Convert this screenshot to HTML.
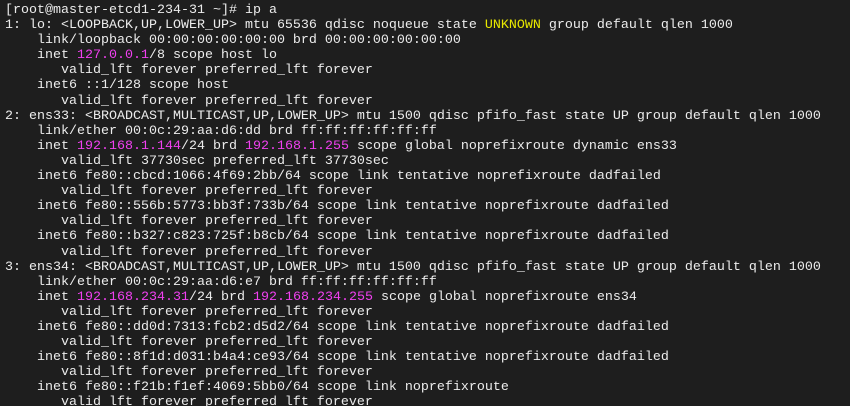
<!DOCTYPE html>
<html><head><meta charset="utf-8"><style>
html,body{margin:0;padding:0;background:#1e1e1e;width:850px;height:406px;overflow:hidden}
pre{margin:0;padding:3px 0 0 5px;font-family:"Liberation Mono","DejaVu Sans Mono",monospace;font-size:13.33px;line-height:15.1px;color:#ececec;white-space:pre}
.m{color:#f040f0}.y{color:#e8e800}
</style></head><body><pre>[root@master-etcd1-234-31 ~]# ip a
1: lo: &lt;LOOPBACK,UP,LOWER_UP&gt; mtu 65536 qdisc noqueue state <span class="y">UNKNOWN</span> group default qlen 1000
    link/loopback 00:00:00:00:00:00 brd 00:00:00:00:00:00
    inet <span class="m">127.0.0.1</span>/8 scope host lo
       valid_lft forever preferred_lft forever
    inet6 ::1/128 scope host
       valid_lft forever preferred_lft forever
2: ens33: &lt;BROADCAST,MULTICAST,UP,LOWER_UP&gt; mtu 1500 qdisc pfifo_fast state UP group default qlen 1000
    link/ether 00:0c:29:aa:d6:dd brd ff:ff:ff:ff:ff:ff
    inet <span class="m">192.168.1.144</span>/24 brd <span class="m">192.168.1.255</span> scope global noprefixroute dynamic ens33
       valid_lft 37730sec preferred_lft 37730sec
    inet6 fe80::cbcd:1066:4f69:2bb/64 scope link tentative noprefixroute dadfailed
       valid_lft forever preferred_lft forever
    inet6 fe80::556b:5773:bb3f:733b/64 scope link tentative noprefixroute dadfailed
       valid_lft forever preferred_lft forever
    inet6 fe80::b327:c823:725f:b8cb/64 scope link tentative noprefixroute dadfailed
       valid_lft forever preferred_lft forever
3: ens34: &lt;BROADCAST,MULTICAST,UP,LOWER_UP&gt; mtu 1500 qdisc pfifo_fast state UP group default qlen 1000
    link/ether 00:0c:29:aa:d6:e7 brd ff:ff:ff:ff:ff:ff
    inet <span class="m">192.168.234.31</span>/24 brd <span class="m">192.168.234.255</span> scope global noprefixroute ens34
       valid_lft forever preferred_lft forever
    inet6 fe80::dd0d:7313:fcb2:d5d2/64 scope link tentative noprefixroute dadfailed
       valid_lft forever preferred_lft forever
    inet6 fe80::8f1d:d031:b4a4:ce93/64 scope link tentative noprefixroute dadfailed
       valid_lft forever preferred_lft forever
    inet6 fe80::f21b:f1ef:4069:5bb0/64 scope link noprefixroute
       valid_lft forever preferred_lft forever
</pre></body></html>
